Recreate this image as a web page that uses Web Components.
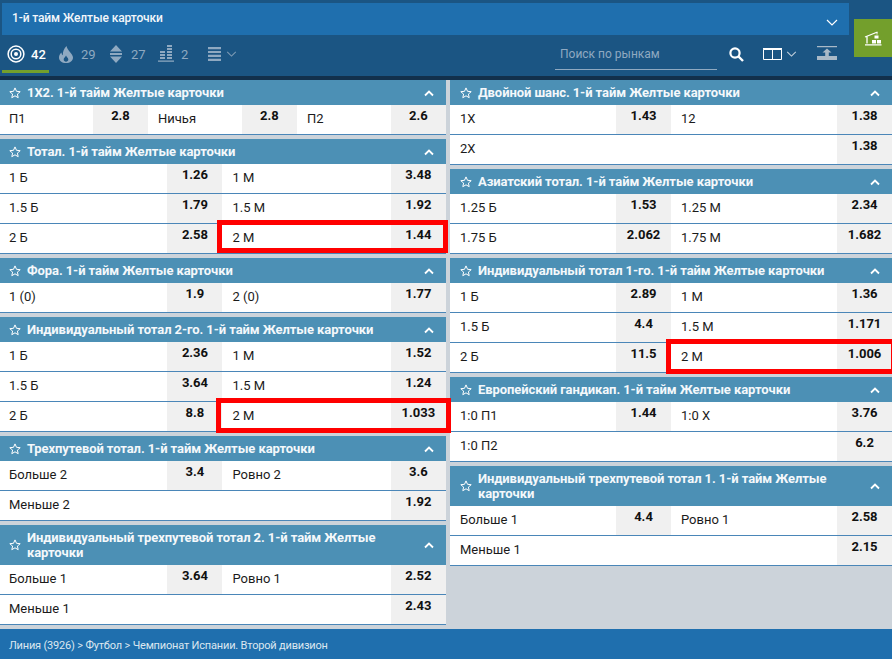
<!DOCTYPE html>
<html lang="ru">
<head>
<meta charset="utf-8">
<title>1-й тайм Желтые карточки</title>
<style>
html, body { margin: 0; padding: 0; }
body { width: 892px; height: 659px; overflow: hidden; font-family: Roboto, "Liberation Sans", sans-serif; background: #ccd3da; }
.cols { display: flex; height: 549px; overflow: hidden; }
.col { display: flex; flex-direction: column; gap: 4px; flex: none; }
.col.l { width: 446.9px; margin-left: -1px; }
.col.r { width: 442px; margin-left: auto; }
</style>
</head>
<body>

<top-bar></top-bar>

<div class="cols">
  <div class="col l">
    <market-card title="1Х2. 1-й тайм Желтые карточки">
      <bet-row><bet-cell label="П1" odd="2.8"></bet-cell><bet-cell label="Ничья" odd="2.8"></bet-cell><bet-cell label="П2" odd="2.6"></bet-cell></bet-row>
    </market-card>
    <market-card title="Тотал. 1-й тайм Желтые карточки">
      <bet-row><bet-cell label="1 Б" odd="1.26"></bet-cell><bet-cell label="1 М" odd="3.48"></bet-cell></bet-row>
      <bet-row><bet-cell label="1.5 Б" odd="1.79"></bet-cell><bet-cell label="1.5 М" odd="1.92"></bet-cell></bet-row>
      <bet-row><bet-cell label="2 Б" odd="2.58"></bet-cell><bet-cell label="2 М" odd="1.44" marked style="--l:-5px;--t:-4px;--r:-2px;--b:0px"></bet-cell></bet-row>
    </market-card>
    <market-card title="Фора. 1-й тайм Желтые карточки">
      <bet-row><bet-cell label="1 (0)" odd="1.9"></bet-cell><bet-cell label="2 (0)" odd="1.77"></bet-cell></bet-row>
    </market-card>
    <market-card title="Индивидуальный тотал 2-го. 1-й тайм Желтые карточки">
      <bet-row><bet-cell label="1 Б" odd="2.36"></bet-cell><bet-cell label="1 М" odd="1.52"></bet-cell></bet-row>
      <bet-row><bet-cell label="1.5 Б" odd="3.64"></bet-cell><bet-cell label="1.5 М" odd="1.24"></bet-cell></bet-row>
      <bet-row><bet-cell label="2 Б" odd="8.8"></bet-cell><bet-cell label="2 М" odd="1.033" marked style="--l:-6px;--t:-4px;--r:-5px;--b:-2px"></bet-cell></bet-row>
    </market-card>
    <market-card title="Трехпутевой тотал. 1-й тайм Желтые карточки">
      <bet-row><bet-cell label="Больше 2" odd="3.4"></bet-cell><bet-cell label="Ровно 2" odd="3.6"></bet-cell></bet-row>
      <bet-row><bet-cell label="Меньше 2" odd="1.92"></bet-cell></bet-row>
    </market-card>
    <market-card title="Индивидуальный трехпутевой тотал 2. 1-й тайм Желтые карточки">
      <bet-row><bet-cell label="Больше 1" odd="3.64"></bet-cell><bet-cell label="Ровно 1" odd="2.52"></bet-cell></bet-row>
      <bet-row><bet-cell label="Меньше 1" odd="2.43"></bet-cell></bet-row>
    </market-card>
  </div>
  <div class="col r">
    <market-card title="Двойной шанс. 1-й тайм Желтые карточки">
      <bet-row><bet-cell label="1Х" odd="1.43"></bet-cell><bet-cell label="12" odd="1.38"></bet-cell></bet-row>
      <bet-row><bet-cell label="2Х" odd="1.38"></bet-cell></bet-row>
    </market-card>
    <market-card title="Азиатский тотал. 1-й тайм Желтые карточки">
      <bet-row><bet-cell label="1.25 Б" odd="1.53"></bet-cell><bet-cell label="1.25 М" odd="2.34"></bet-cell></bet-row>
      <bet-row><bet-cell label="1.75 Б" odd="2.062"></bet-cell><bet-cell label="1.75 М" odd="1.682"></bet-cell></bet-row>
    </market-card>
    <market-card title="Индивидуальный тотал 1-го. 1-й тайм Желтые карточки">
      <bet-row><bet-cell label="1 Б" odd="2.89"></bet-cell><bet-cell label="1 М" odd="1.36"></bet-cell></bet-row>
      <bet-row><bet-cell label="1.5 Б" odd="4.4"></bet-cell><bet-cell label="1.5 М" odd="1.171"></bet-cell></bet-row>
      <bet-row><bet-cell label="2 Б" odd="11.5"></bet-cell><bet-cell label="2 М" odd="1.006" marked style="--l:-5px;--t:-4px;--r:-4px;--b:-2px"></bet-cell></bet-row>
    </market-card>
    <market-card title="Европейский гандикап. 1-й тайм Желтые карточки">
      <bet-row><bet-cell label="1:0 П1" odd="1.44"></bet-cell><bet-cell label="1:0 Х" odd="3.76"></bet-cell></bet-row>
      <bet-row><bet-cell label="1:0 П2" odd="6.2"></bet-cell></bet-row>
    </market-card>
    <market-card title="Индивидуальный трехпутевой тотал 1. 1-й тайм Желтые карточки">
      <bet-row><bet-cell label="Больше 1" odd="4.4"></bet-cell><bet-cell label="Ровно 1" odd="2.58"></bet-cell></bet-row>
      <bet-row><bet-cell label="Меньше 1" odd="2.15"></bet-cell></bet-row>
    </market-card>
  </div>
</div>

<page-footer>Линия (3926) &gt; Футбол &gt; Чемпионат Испании. Второй дивизион</page-footer>

<script>
// chevron used in a few places
const chevron = (w, h, color) => `<svg width="${w}" height="${h}" viewBox="0 0 12 7" fill="none" stroke="${color}" stroke-width="1.2"><path d="M1 1l5 5 5-5"/></svg>`;

class TabItem extends HTMLElement {
  constructor() {
    super();
    this.attachShadow({mode: 'open'}).innerHTML = `
<style>
:host { display: flex; width: 50px; height: 35px; box-sizing: border-box; align-items: center; position: relative; padding-bottom: 3px; color: #8fa9c1; font-size: 13px; }
:host([active]) { color: #fff; font-weight: 500; }
:host([active]) .bar { display: block; }
.ico { width: 28px; height: 20px; display: flex; justify-content: center; align-items: center; flex: none; }
.num { padding-left: 1px; }
.bar { display: none; position: absolute; left: 0; bottom: 0; width: 47px; height: 3px; background: #739f2c; }
</style>
<span class="ico"><slot name="icon"></slot></span><span class="num"><slot></slot></span><span class="bar"></span>`;
  }
}
customElements.define('tab-item', TabItem);

class TopBar extends HTMLElement {
  constructor() {
    super();
    this.attachShadow({mode: 'open'}).innerHTML = `
<style>
:host { display: block; height: 80px; box-sizing: border-box; background: #1b5583; border-bottom: 4px solid #12304c; font-family: Roboto, "Liberation Sans", sans-serif; }
.title { margin-left: 2px; width: 847px; height: 32px; box-sizing: border-box; position: relative; top: 3px; background: #1f6fae; color: #f2f6fa; font-size: 12px; font-weight: 500; letter-spacing: -.12px; display: flex; justify-content: space-between; padding: 8px 11px 0 10px; }
.title svg { margin-top: 8px; }
.tools { display: flex; align-items: center; height: 41px; margin-top: 3px; padding-left: 2px; }
.more { display: flex; align-items: center; gap: 5px; margin-left: 6px; padding-bottom: 3px; }
.search { margin-left: 318px; margin-bottom: 5px; width: 162px; height: 34px; box-sizing: border-box; border-bottom: 1px solid #8fa9c1; color: #8fa9c1; font-size: 12px; padding: 11px 0 0 5px; }
.tool { display: flex; align-items: center; padding-bottom: 3px; }
.green { position: absolute; right: 0; top: 19px; width: 38px; height: 38px; background: #739f2c; display: flex; align-items: center; justify-content: center; }
</style>
<div class="title"><span>1-й тайм Желтые карточки</span>${chevron(12, 7, '#fff')}</div>
<div class="tools">
  <tab-item active>
    <svg slot="icon" width="18" height="18" viewBox="0 0 18 18" fill="none" stroke="#fff"><circle cx="9" cy="9" r="7.9" stroke-width="1.5"/><circle cx="9" cy="9" r="4.8" stroke-width="1.5"/><circle cx="9" cy="9" r="2" fill="#fff" stroke="none"/></svg>42
  </tab-item>
  <tab-item>
    <svg slot="icon" width="14" height="17" viewBox="0 0 14 17"><path fill="#8fa9c1" fill-rule="evenodd" d="M7.5 0c.6 2.6 1.7 3.7 3 5.400C12.600 8 14 9.500 14 11.400 14 14.700 11 17 7 17s-7-2.300-7-5.600c0-2.100 1-3.700 2.500-5 .1 1.300.5 2.200 1.300 2.800C3.700 5.600 5 2.700 7.500 0zM7 9.500c-.5 1.400-2.300 2.300-2.300 4 0 1.300 1 2.200 2.300 2.200s2.300-.9 2.300-2.200c0-1.700-1.800-2.600-2.300-4z"/></svg>29
  </tab-item>
  <tab-item>
    <svg slot="icon" width="12" height="18" viewBox="0 0 12 18" fill="#8fa9c1"><path d="M6 0l6 6.500H0zM0 8h12v2H0zM0 11.500h12L6 18z"/></svg>27
  </tab-item>
  <tab-item>
    <svg slot="icon" width="16" height="18" viewBox="0 0 16 18" fill="#8fa9c1"><path d="M9 0h5v2H9zM9 3h5v2H9zM9 6h5v2H9zM9 9h5v2H9zM9 12h5v2H9zM2 6h5v2H2zM2 9h5v2H2zM2 12h5v2H2zM0 15.500h16v1.200H0z"/></svg>2
  </tab-item>
  <div class="more">
    <svg width="13" height="14" viewBox="0 0 13 14" fill="#8fa9c1"><path d="M0 0h13v2.200H0zM0 3.900h13v2.200H0zM0 7.800h13V10H0zM0 11.700h13V14H0z"/></svg>
    ${chevron(11, 6, '#7e9bb5')}
  </div>
  <div class="search">Поиск по рынкам</div>
  <div class="tool" style="margin-left:12px">
    <svg width="15" height="15" viewBox="0 0 15 15" fill="none" stroke="#fff"><circle cx="6" cy="6" r="4.600" stroke-width="2.200"/><path d="M9.500 9.500L14 14" stroke-width="2.400"/></svg>
  </div>
  <div class="tool" style="margin-left:19px;gap:4px">
    <svg width="19" height="12" viewBox="0 0 19 12" fill="none" stroke="#fff"><path d="M.5 1.500v10h18v-10z"/><path d="M0 .8h19" stroke-width="1.600"/><path d="M9.500 1v10.500"/></svg>
    ${chevron(11, 6, '#c5d2de')}
  </div>
  <div class="tool" style="margin-left:20px">
    <svg width="20" height="16" viewBox="0 0 20 16" fill="#a9b9c7"><path d="M0 0h20v1.200H0zM10 2.500l4.500 4H11.800V10H8.200V6.500H5.500zM0 10h20v4H0z"/></svg>
  </div>
</div>
<div class="green">
  <svg width="18" height="15" viewBox="0 0 18 15" fill="none" stroke="#fff"><path d="M3 12.500V5M1 6L13.500 1" stroke-width="1.300"/><path d="M13 1v2.500" stroke-width=".9"/><path fill="#fff" stroke="none" d="M10.500 4.500h4V7.500h-4zM8 9h4v3.500H8zM13 9h4v3.500h-4zM1 13.200h16.500v1.300H1z"/></svg>
</div>`;
  }
}
customElements.define('top-bar', TopBar);

class MarketCard extends HTMLElement {
  constructor() {
    super();
    this.attachShadow({mode: 'open'}).innerHTML = `
<style>
:host { display: block; font-family: Roboto, "Liberation Sans", sans-serif; }
header { background: #4c90b5; color: #f4f8fb; font-size: 13px; font-weight: 700; line-height: 15px; letter-spacing: -.08px; min-height: 25px; box-sizing: border-box; padding: 5px 12px 5px 10px; display: flex; align-items: center; }
.star { flex: none; width: 12px; height: 12px; margin-right: 6px; }
.name { flex: 1; padding-right: 22px; }
.up { flex: none; margin-top: 1px; }
</style>
<header>
  <svg class="star" viewBox="0 0 12 12" fill="none" stroke="#fff" stroke-width="1"><path d="M6 .9l1.500 3.400 3.700.4-2.800 2.400.8 3.600L6 8.800l-3.200 1.900.8-3.600L.8 4.700l3.700-.4z"/></svg>
  <span class="name"></span>
  <svg class="up" width="10" height="7" viewBox="0 0 10 7" fill="none" stroke="#fff" stroke-width="1.800"><path d="M1 5.500l4-4 4 4"/></svg>
</header>
<slot></slot>`;
    this.shadowRoot.querySelector('.name').textContent = this.getAttribute('title');
    this.removeAttribute('title');
  }
}
customElements.define('market-card', MarketCard);

class BetRow extends HTMLElement {
  constructor() {
    super();
    this.attachShadow({mode: 'open'}).innerHTML = `
<style>
:host { display: flex; height: 30px; box-sizing: border-box; background: #fff; border-bottom: 1px solid #4a86b8; }
::slotted(bet-cell) { flex: 1 1 0; min-width: 0; }
</style>
<slot></slot>`;
  }
}
customElements.define('bet-row', BetRow);

class BetCell extends HTMLElement {
  constructor() {
    super();
    this.attachShadow({mode: 'open'}).innerHTML = `
<style>
:host { display: flex; position: relative; height: 29px; color: #1b1b1b; font-size: 13px; }
.lab { flex: 1; padding: 6px 0 0 10px; line-height: 15px; }
.odd { width: 55px; flex: none; background: #f0f0f0; font-weight: 700; text-align: center; line-height: 15px; padding-top: 3px; box-sizing: border-box; color: #111; }
.mark { display: none; position: absolute; left: var(--l); top: var(--t); right: var(--r); bottom: var(--b); border: 5px solid #f00; pointer-events: none; }
:host([marked]) .mark { display: block; }
</style>
<span class="lab"></span><span class="odd"></span><span class="mark"></span>`;
    this.shadowRoot.querySelector('.lab').textContent = this.getAttribute('label');
    this.shadowRoot.querySelector('.odd').textContent = this.getAttribute('odd');
  }
}
customElements.define('bet-cell', BetCell);

class PageFooter extends HTMLElement {
  constructor() {
    super();
    this.attachShadow({mode: 'open'}).innerHTML = `
<style>
:host { display: block; height: 30px; box-sizing: border-box; background: #1f6fae; color: #dce7f0; font-size: 11px; letter-spacing: -.18px; line-height: 15px; padding: 9px 0 0 9px; font-family: Roboto, "Liberation Sans", sans-serif; }
</style>
<slot></slot>`;
  }
}
customElements.define('page-footer', PageFooter);
</script>
</body>
</html>
